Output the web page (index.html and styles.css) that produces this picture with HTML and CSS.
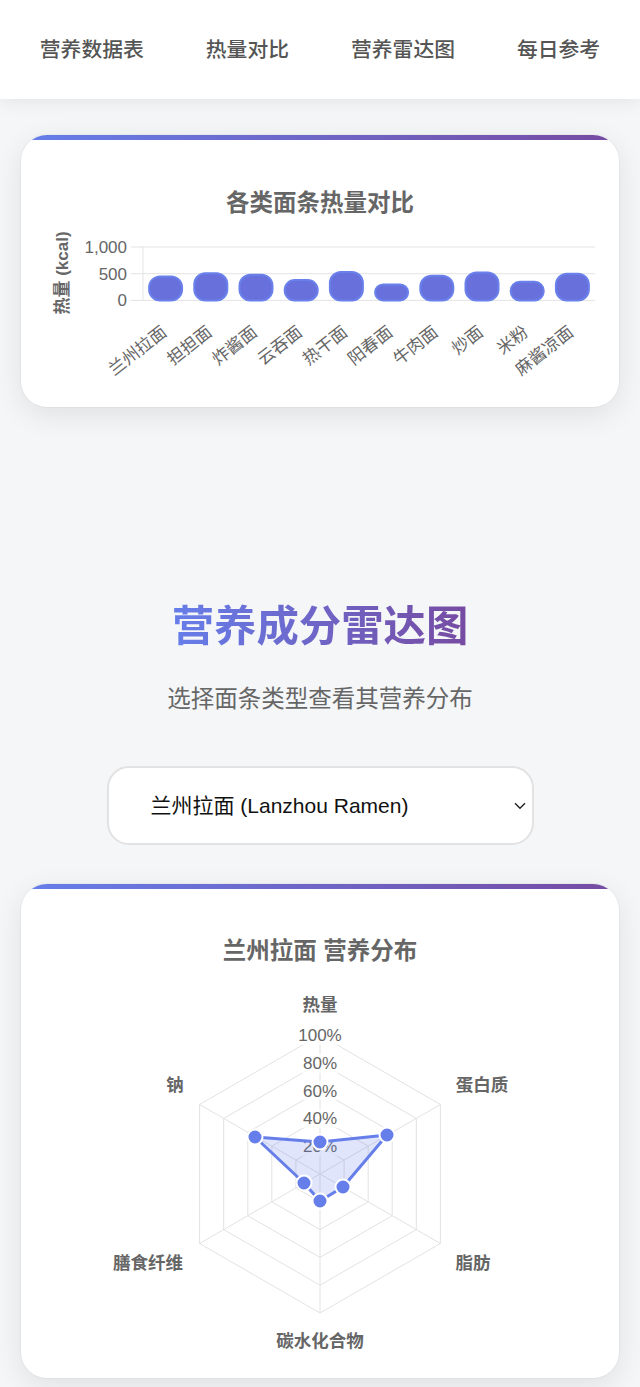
FILE: index.html
```html
<!DOCTYPE html>
<html lang="zh-CN">
<head>
<meta charset="utf-8">
<title>面条营养</title>
<link rel="stylesheet" href="styles.css">
</head>
<body>
<nav class="topnav">
  <a class="nav-link" href="#table">营养数据表</a>
  <a class="nav-link" href="#calories">热量对比</a>
  <a class="nav-link" href="#radar">营养雷达图</a>
  <a class="nav-link" href="#daily">每日参考</a>
</nav>

<main class="page">
  <section class="card" id="calories">
    <svg class="chart chart-bar" viewBox="21 140 598 267" width="598" height="267">
      <text class="chart-title" x="320" y="203">各类面条热量对比</text>
      <text class="axis-title" transform="translate(62 273) rotate(-90)">热量 (kcal)</text>
      <g class="grid">
        <line x1="131" y1="247" x2="595" y2="247"/>
        <line x1="131" y1="273.7" x2="595" y2="273.7"/>
        <line x1="131" y1="300.4" x2="595" y2="300.4"/>
        <line x1="143" y1="247" x2="143" y2="300.4"/>
      </g>
      <g class="ytick">
        <text x="127" y="247">1,000</text>
        <text x="127" y="274">500</text>
        <text x="127" y="300.5">0</text>
      </g>
      <g class="bars">
        <rect x="149.1" y="276.4" width="33" height="24" rx="11"/>
        <rect x="194.3" y="273.2" width="33" height="27.2" rx="11"/>
        <rect x="239.5" y="274.8" width="33" height="25.6" rx="11"/>
        <rect x="284.7" y="280.1" width="33" height="20.3" rx="10"/>
        <rect x="329.9" y="272.1" width="33" height="28.3" rx="11"/>
        <rect x="375.1" y="284.4" width="33" height="16" rx="8"/>
        <rect x="420.3" y="275.8" width="33" height="24.6" rx="11"/>
        <rect x="465.5" y="272.6" width="33" height="27.8" rx="11"/>
        <rect x="510.7" y="281.7" width="33" height="18.7" rx="9"/>
        <rect x="555.9" y="273.7" width="33" height="26.7" rx="11"/>
      </g>
      <g class="xtick">
        <text transform="translate(164.5 330) rotate(-38)">兰州拉面</text>
        <text transform="translate(209.7 330) rotate(-38)">担担面</text>
        <text transform="translate(254.9 330) rotate(-38)">炸酱面</text>
        <text transform="translate(300.1 330) rotate(-38)">云吞面</text>
        <text transform="translate(345.3 330) rotate(-38)">热干面</text>
        <text transform="translate(390.5 330) rotate(-38)">阳春面</text>
        <text transform="translate(435.7 330) rotate(-38)">牛肉面</text>
        <text transform="translate(480.9 330) rotate(-38)">炒面</text>
        <text transform="translate(526.1 330) rotate(-38)">米粉</text>
        <text transform="translate(571.3 330) rotate(-38)">麻酱凉面</text>
      </g>
    </svg>
  </section>

  <section class="radar-section" id="radar">
    <h2 class="section-title">营养成分雷达图</h2>
    <p class="section-sub">选择面条类型查看其营养分布</p>
    <div class="select-wrap">
      <select class="noodle-select">
        <option>兰州拉面 (Lanzhou Ramen)</option>
        <option>担担面 (Dandan Noodles)</option>
        <option>炸酱面 (Zhajiang Noodles)</option>
      </select>
      <svg class="select-arrow" viewBox="0 0 12 8" width="12" height="8"><path d="M1 1.2 L6 6.2 L11 1.2"/></svg>
    </div>

    <div class="card">
      <svg class="chart chart-radar" viewBox="21 889 598 489" width="598" height="489">
        <text class="chart-title" x="320" y="951">兰州拉面 营养分布</text>
        <g class="rgrid">
          <polygon points="320,1035 440.4,1104.5 440.4,1243.5 320,1313 199.6,1243.5 199.6,1104.5"/>
          <polygon points="320,1062.8 416.3,1118.4 416.3,1229.6 320,1285.2 223.7,1229.6 223.7,1118.4"/>
          <polygon points="320,1090.6 392.2,1132.3 392.2,1215.7 320,1257.4 247.8,1215.7 247.8,1132.3"/>
          <polygon points="320,1118.4 368.2,1146.2 368.2,1201.8 320,1229.6 271.8,1201.8 271.8,1146.2"/>
          <polygon points="320,1146.2 344.1,1160.1 344.1,1187.9 320,1201.8 295.9,1187.9 295.9,1160.1"/>
          <line x1="320" y1="1174" x2="320" y2="1035"/>
          <line x1="320" y1="1174" x2="440.4" y2="1104.5"/>
          <line x1="320" y1="1174" x2="440.4" y2="1243.5"/>
          <line x1="320" y1="1174" x2="320" y2="1313"/>
          <line x1="320" y1="1174" x2="199.6" y2="1243.5"/>
          <line x1="320" y1="1174" x2="199.6" y2="1104.5"/>
        </g>
        <g class="rtick">
          <rect x="298" y="1026" width="44" height="19"/>
          <text x="320" y="1035.5">100%</text>
          <rect x="302" y="1054" width="36" height="19"/>
          <text x="320" y="1063.3">80%</text>
          <rect x="302" y="1081" width="36" height="19"/>
          <text x="320" y="1091">60%</text>
          <rect x="302" y="1109" width="36" height="19"/>
          <text x="320" y="1118.8">40%</text>
          <rect x="302" y="1137" width="36" height="19"/>
          <text x="320" y="1146.5">20%</text>
        </g>
        <polygon class="rdata" points="320,1142 387,1135 343,1187 320,1201 304,1183 255,1137"/>
        <g class="rpoints">
          <circle cx="320" cy="1142" r="7.5"/>
          <circle cx="387" cy="1135" r="7.5"/>
          <circle cx="343" cy="1187" r="7.5"/>
          <circle cx="320" cy="1201" r="7.5"/>
          <circle cx="304" cy="1183" r="7.5"/>
          <circle cx="255" cy="1137" r="7.5"/>
        </g>
        <g class="rlabel">
          <text x="320" y="1005">热量</text>
          <text x="482" y="1084.5">蛋白质</text>
          <text x="473" y="1263">脂肪</text>
          <text x="320" y="1341">碳水化合物</text>
          <text x="148" y="1263">膳食纤维</text>
          <text x="175" y="1084.5">钠</text>
        </g>
      </svg>
    </div>
  </section>
</main>
</body>
</html>
```

FILE: styles.css
```css
* {
  box-sizing: border-box;
}

body {
  margin: 0;
  background: #f5f6f8;
  font-family: "Liberation Sans", "Noto Sans CJK SC", sans-serif;
  color: #333;
}

.topnav {
  height: 99px;
  padding-bottom: 4px;
  background: #ffffff;
  display: flex;
  align-items: center;
  justify-content: center;
  gap: 62px;
  box-shadow: 0 2px 18px rgba(0, 0, 0, 0.08);
  position: relative;
  z-index: 2;
}

.nav-link {
  font-size: 20.8px;
  line-height: 28px;
  font-weight: 500;
  color: #555;
  text-decoration: none;
  font-family: "Noto Sans CJK SC", sans-serif;
}

.page {
  padding: 36px 21px 40px;
}

.card {
  background: #ffffff;
  border-radius: 26px;
  overflow: hidden;
  box-shadow: 0 8px 30px rgba(0, 0, 0, 0.09), 0 0 0 1px rgba(0, 0, 0, 0.03);
}

.card::before {
  content: "";
  display: block;
  height: 5px;
  background: linear-gradient(90deg, #667eea, #764ba2);
}

.chart {
  display: block;
  font-family: "Liberation Sans", "Noto Sans CJK SC", sans-serif;
}

.chart-title {
  font-size: 23.5px;
  font-weight: 700;
  fill: #666;
  text-anchor: middle;
  dominant-baseline: central;
}

.axis-title {
  font-size: 17px;
  font-weight: 700;
  fill: #666;
  text-anchor: middle;
  dominant-baseline: central;
}

.grid line {
  stroke: #e3e3e3;
  stroke-width: 1;
}

.ytick text {
  font-size: 17px;
  fill: #666;
  text-anchor: end;
  dominant-baseline: central;
}

.bars rect {
  fill: #6870dc;
  stroke: #6a80ea;
  stroke-width: 2;
}

.xtick text {
  font-size: 17px;
  fill: #666;
  text-anchor: end;
  dominant-baseline: central;
}

.radar-section {
  display: flex;
  flex-direction: column;
  align-items: stretch;
}

.section-title {
  margin: 190px 0 0;
  font-size: 42.4px;
  line-height: 51px;
  font-weight: 700;
  text-align: center;
  font-family: "Noto Sans CJK SC", sans-serif;
  align-self: center;
  background: linear-gradient(90deg, #667eea, #764ba2);
  -webkit-background-clip: text;
  background-clip: text;
  color: transparent;
}

.section-sub {
  margin: 31px 0 0;
  font-size: 23.5px;
  line-height: 36px;
  color: #666;
  text-align: center;
  font-family: "Noto Sans CJK SC", sans-serif;
}

.select-wrap {
  position: relative;
  align-self: center;
  width: 427px;
  margin: 51px 0 39px;
}

.noodle-select {
  display: block;
  width: 100%;
  height: 79px;
  border: 2px solid #e2e2e2;
  border-radius: 22px;
  background: #ffffff;
  padding: 0 40px 0 42px;
  font-size: 21px;
  font-family: "Liberation Sans", "Noto Sans CJK SC", sans-serif;
  color: #111;
  -webkit-appearance: none;
  appearance: none;
  outline: none;
}

.select-arrow {
  position: absolute;
  right: 8px;
  top: 36px;
  fill: none;
  stroke: #222;
  stroke-width: 1.4;
  pointer-events: none;
}

.rgrid polygon,
.rgrid line {
  fill: none;
  stroke: #e2e2e2;
  stroke-width: 1;
}

.rtick rect {
  fill: rgba(255, 255, 255, 0.75);
}

.rtick text {
  font-size: 17px;
  fill: #666;
  text-anchor: middle;
  dominant-baseline: central;
}

.rdata {
  fill: rgba(102, 126, 234, 0.2);
  stroke: #667eea;
  stroke-width: 3;
  stroke-linejoin: round;
}

.rpoints circle {
  fill: #667eea;
  stroke: #ffffff;
  stroke-width: 2;
}

.rlabel text {
  font-size: 17.5px;
  font-weight: 700;
  fill: #666;
  text-anchor: middle;
  dominant-baseline: central;
}
```
